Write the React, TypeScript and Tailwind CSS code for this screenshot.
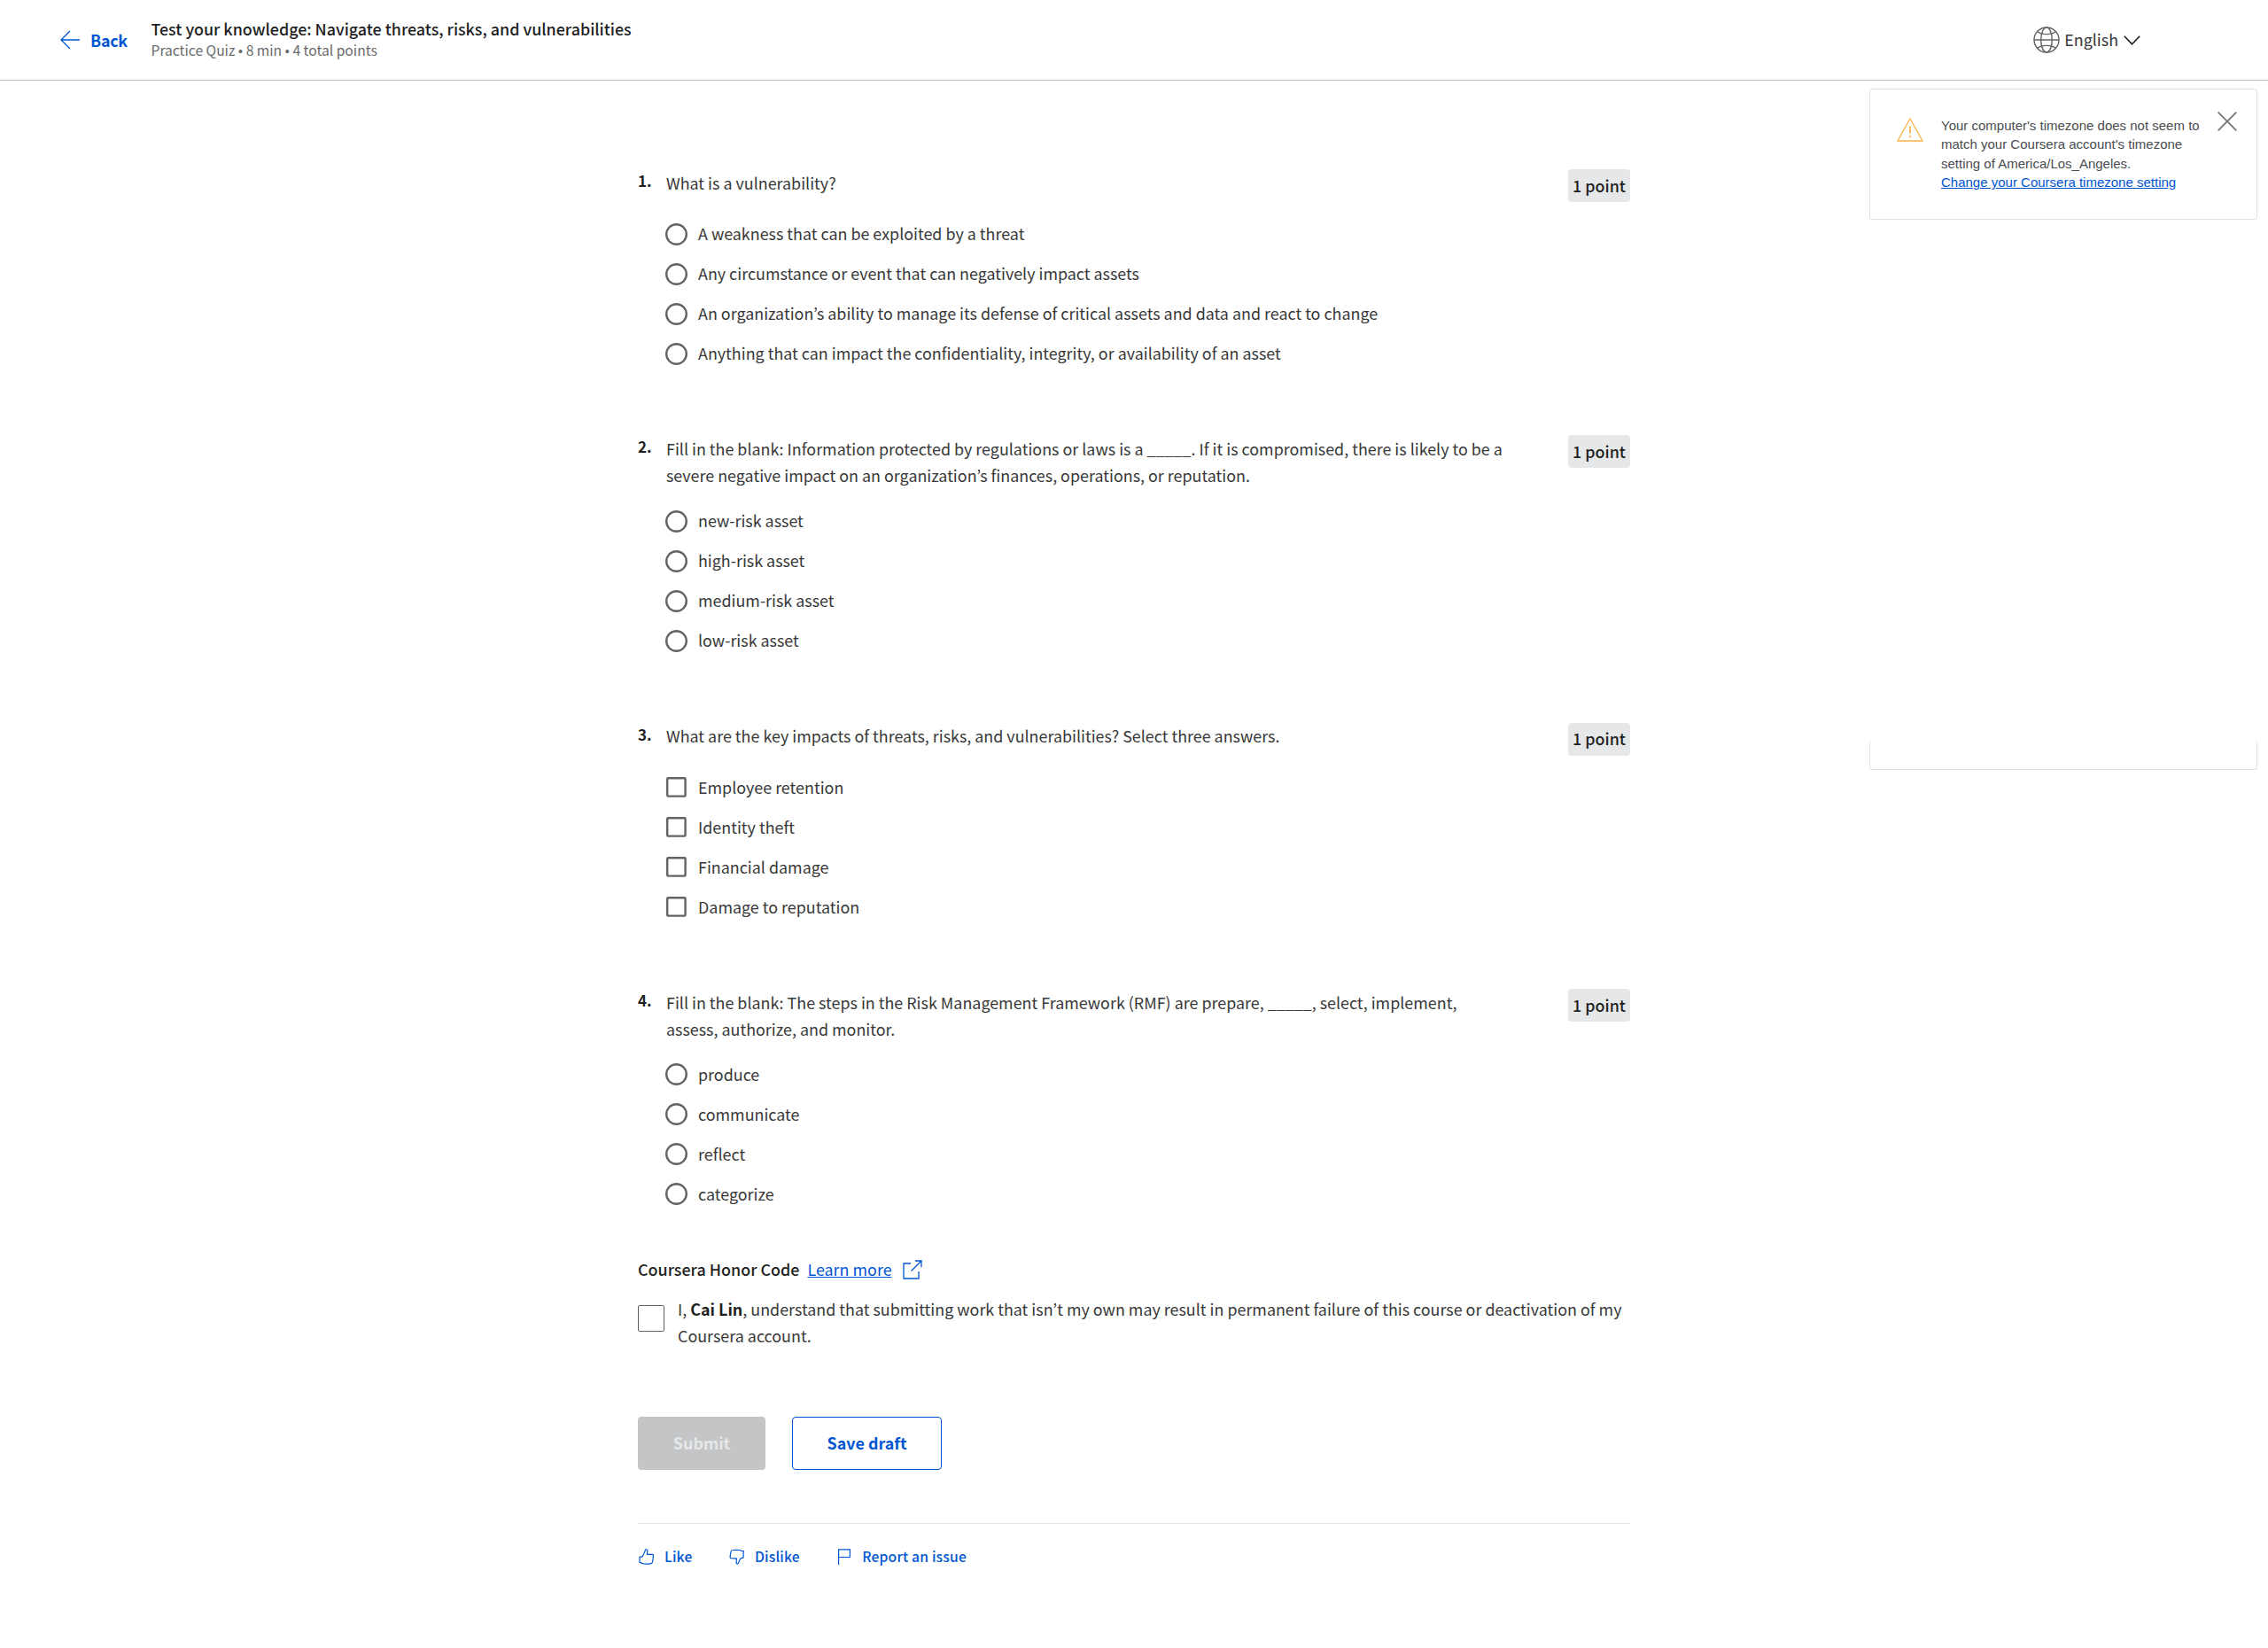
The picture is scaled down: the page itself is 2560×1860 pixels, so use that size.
import type { ReactNode } from 'react';

type Question = { text: string; kind: 'radio' | 'checkbox'; options: string[] };

const questions: Question[] = [
  {
    text: 'What is a vulnerability?',
    kind: 'radio',
    options: [
      'A weakness that can be exploited by a threat',
      'Any circumstance or event that can negatively impact assets',
      'An organization’s ability to manage its defense of critical assets and data and react to change',
      'Anything that can impact the confidentiality, integrity, or availability of an asset',
    ],
  },
  {
    text: 'Fill in the blank: Information protected by regulations or laws is a _____. If it is compromised, there is likely to be a severe negative impact on an organization’s finances, operations, or reputation.',
    kind: 'radio',
    options: ['new-risk asset', 'high-risk asset', 'medium-risk asset', 'low-risk asset'],
  },
  {
    text: 'What are the key impacts of threats, risks, and vulnerabilities? Select three answers.',
    kind: 'checkbox',
    options: ['Employee retention', 'Identity theft', 'Financial damage', 'Damage to reputation'],
  },
  {
    text: 'Fill in the blank: The steps in the Risk Management Framework (RMF) are prepare, _____, select, implement, assess, authorize, and monitor.',
    kind: 'radio',
    options: ['produce', 'communicate', 'reflect', 'categorize'],
  },
];

function QuestionBlock({ number, question }: { number: number; question: Question }) {
  const twoLines = question.text.length > 100;
  return (
    <section>
      <div className={twoLines ? 'flex h-[74.4px] items-start' : 'flex h-[50.8px] items-start'}>
        <span className="-mt-px w-8 shrink-0 text-[17px] leading-7 font-bold">{number}.</span>
        <p className="-mt-[0.4px] w-[948px] text-[#383838]">{question.text}</p>
        <span className="ml-auto flex h-[37px] w-[70px] items-center justify-center rounded bg-[#e5e7e8] pb-0.5 font-medium whitespace-nowrap">
          1 point
        </span>
      </div>
      <ul className="pl-[31px] text-[#383838]">
        {question.options.map((option) => (
          <li key={option} className="flex h-[45px] items-center">
            <svg className="size-[25px]" viewBox="0 0 25 25" fill="none" stroke="#636363" strokeWidth="2.4">
              {question.kind === 'radio' ? (
                <circle cx="12.5" cy="12.5" r="11.3" />
              ) : (
                <rect x="2.2" y="2.2" width="20.4" height="20.4" rx="1" />
              )}
            </svg>
            <span className="mb-0.5 ml-3">{option}</span>
          </li>
        ))}
      </ul>
    </section>
  );
}

function FooterAction({ icon, label }: { icon: ReactNode; label: string }) {
  return (
    <button className="flex items-center gap-3 text-[15.63px] leading-6 font-medium tracking-[0.2px] text-[#0056d2]">
      <svg className="size-[18px]" viewBox="0 0 18 18" fill="none" stroke="currentColor" strokeWidth="1.2">
        {icon}
      </svg>
      {label}
    </button>
  );
}

export default function App() {
  return (
    <div className="min-h-[1860px] w-[2560px] bg-white font-['Noto_Sans_CJK_KR','Noto_Sans',sans-serif] text-[17.9px] leading-[30px] text-[#1f1f1f]">
      <header className="flex h-[91px] items-center border-b border-[#bdbdbd] pl-[68px]">
        <a className="flex items-center gap-3 font-bold text-[#0056d2]">
          <svg className="h-[22px] w-[22px]" viewBox="0 0 22 22" fill="none" stroke="currentColor" strokeWidth="1.3">
            <path d="M22 11H1M11 1L1 11l10 10" />
          </svg>
          <span className="-tracking-[0.3px]">Back</span>
        </a>
        <div className="-mt-0.5 ml-[26.7px]">
          <h1 className="text-[17.86px] leading-[25px] font-medium">Test your knowledge: Navigate threats, risks, and vulnerabilities</h1>
          <p className="text-[15.63px] leading-[23px] text-[#6b6b6b]">Practice Quiz • 8 min • 4 total points</p>
        </div>
        <button className="mr-[144px] ml-auto flex items-center">
          <svg className="size-[30px]" viewBox="0 0 30 30" fill="none" stroke="#636363" strokeWidth="1.4">
            <circle cx="15" cy="15" r="14" />
            <ellipse cx="15" cy="15" rx="6.3" ry="14" />
            <path d="M1 15h28M4.500 5.500c5 4.200 16 4.200 21 0M4.500 24.500c5-4.200 16-4.200 21 0" />
          </svg>
          <span className="mb-0.5 ml-[5px] text-[#383838]">English</span>
          <svg className="ml-1.5 h-[11px] w-[19px]" viewBox="0 0 19 11" fill="none" stroke="currentColor" strokeWidth="1.6">
            <path d="M.8.8l8.700 9 8.700-9" />
          </svg>
        </button>
      </header>

      <div className="flex">
        <main className="ml-[720px] w-[1120px] pt-[100px]">
          <div className="flex flex-col gap-[69.7px]">
            {questions.map((question, i) => (
              <QuestionBlock key={question.text} number={i + 1} question={question} />
            ))}
          </div>

          <div className="mt-[47.500px] flex h-[30px] items-center">
            <span className="mb-0.5 font-medium">Coursera Honor Code</span>
            <a className="mb-0.5 ml-[9px] text-[#0056d2] underline">Learn more</a>
            <svg className="ml-3 size-[22px]" viewBox="0 0 22 22" fill="none" stroke="#0056d2" strokeWidth="1.3">
              <path d="M9 4H1v17h17v-8M9.500 12.500L21 1M14 1h7v7" />
            </svg>
          </div>
          <div className="mt-[14px] flex items-start">
            <span className="mt-[11px] size-[30px] shrink-0 rounded-xs border border-[#636363]" />
            <p className="ml-[15px] pb-px text-[#383838]">
              I, <strong className="font-bold text-[#1f1f1f]">Cai Lin</strong>, understand that submitting work that
              isn’t my own may result in permanent failure of this course or deactivation of my Coursera account.
            </p>
          </div>

          <div className="mt-[76px] flex gap-[30px]">
            <button className="h-[60px] w-[144px] rounded bg-[#c4c5c7] pb-0.5 font-bold text-[#e5e7e8]">Submit</button>
            <button className="h-[60px] w-[169px] rounded border border-[#0056d2] pb-0.5 font-bold text-[#0056d2]">
              Save draft
            </button>
          </div>

          <div className="mt-[60px] flex gap-[40.4px] border-t border-[#e5e5e5] pt-[25px]">
            <FooterAction
              label="Like"
              icon={<path d="M2 9.300c1.500 0 2.700-.2 3.300-.8.900-.9 1-2.300 1.700-3.500C7.800 3.800 8 2.500 8.500 1.300c.4-.9 1.900-.7 2.300.3.300 1.400-.3 3-.4 4.700h6.300c.6 0 .8.5.7 1.100-.2 2.200-.3 4.500-.7 6.600-.3 1.800-1 2.800-2.400 2.900-2.500.3-5.300.3-7.800 0-1.600-.3-2.700-1-4.500-1.500z" />}
            />
            <FooterAction
              label="Dislike"
              icon={<path d="M17.300 2.500h-2.500c-.5-.8-1-1-2-1-2.500-.2-5-.2-7.500 0-1.200.1-2 .6-2.200 1.700-.4 2-.8 4-1 6-.1.900.2 1.300 1 1.400 2.200 0 4.300.2 6.400.5-.2 1.700-.6 3.400-.3 5.100.2 1.200 1.600 1.200 2.100.3.900-1.600 1.200-3.800 2.400-5.200.8-.9 1.900-1.200 3.300-1.200z" />}
            />
            <FooterAction label="Report an issue" icon={<path d="M3.600 18V.8h12.800v8.700H3.600" />} />
          </div>
        </main>

        <aside className="mr-3 ml-auto w-[438px] pt-[9px] font-['Liberation_Sans',sans-serif] text-[15px] leading-[21.4px] text-[#4a4d50]">
          <div className="flex h-[148px] rounded-[3px] border border-[#e1e1e1] pt-[30px] pl-[30px]">
            <svg className="mt-px size-[30px]" viewBox="0 0 30 30" fill="none" stroke="#f9b34a" strokeWidth="1.3">
              <path d="M15 2L29 27H1z" />
              <path d="M15 10.500v8M15 21v2.300" strokeWidth="1.700" />
            </svg>
            <div className="ml-5 w-[300px]">
              <p>
                Your computer's timezone does not seem to match your Coursera account's timezone setting of
                America/Los_Angeles.
              </p>
              <a className="block text-[#0056d2] underline">Change your Coursera timezone setting</a>
            </div>
            <svg className="-mt-[5px] ml-3 size-[22px]" viewBox="0 0 22 22" stroke="#757575" strokeWidth="1.8">
              <path d="M.7.7l20.600 20.600M21.300.7L.7 21.300" />
            </svg>
          </div>
          <div className="mt-[589px] h-8 rounded-b-[3px] border border-t-0 border-[#e1e1e1]" />
        </aside>
      </div>
    </div>
  );
}
